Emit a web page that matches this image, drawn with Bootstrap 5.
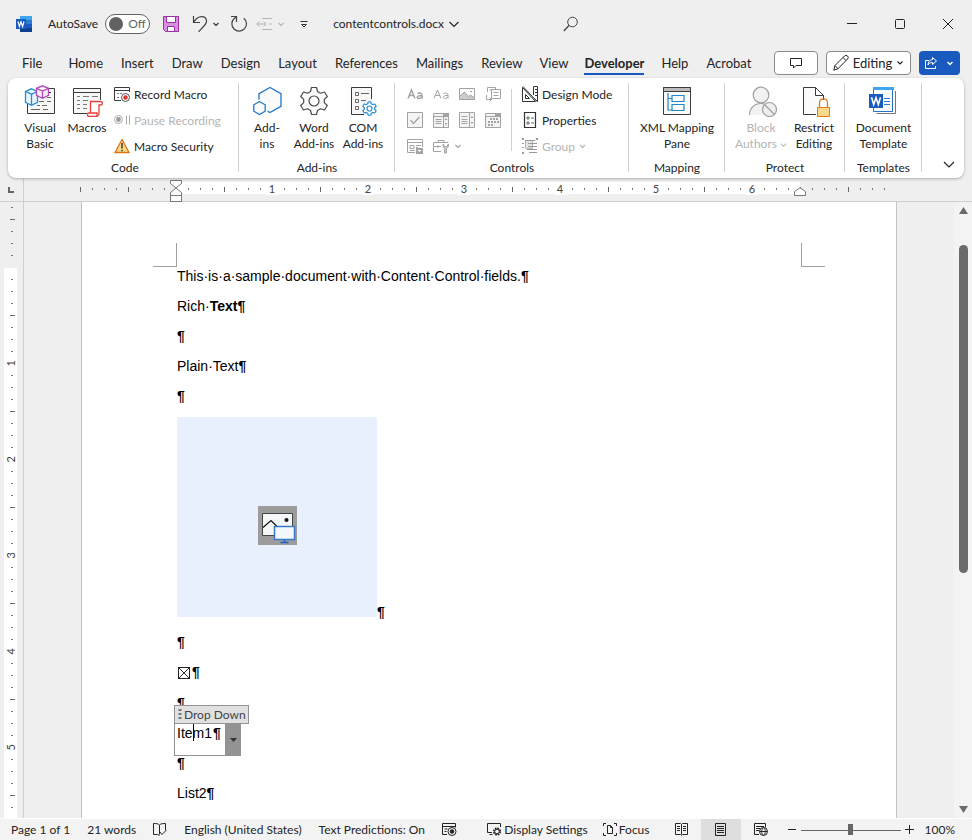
<!DOCTYPE html>
<html lang="en">
<head>
<meta charset="utf-8">
<meta name="viewport" content="width=device-width, initial-scale=1">
<title>contentcontrols.docx - Word</title>
<link href="https://cdn.jsdelivr.net/npm/bootstrap@5.3.0/dist/css/bootstrap.min.css" rel="stylesheet">
<style>
:root { --ink:#242424; --dim:#b4b4b4; --chrome:#efefef; --blue:#185abd; }
body { font:12px/16px Lato,"Open Sans",sans-serif; color:var(--ink); background:var(--chrome); fill:none; stroke:currentColor; }
svg { display:block; flex:none; }
button { border:0; background:none; padding:0; color:inherit; }
.gap-l2 { margin-left:2px; } .gap-l4 { margin-left:4px; } .gap-l8 { margin-left:8px; } .gap-l10 { margin-left:10px; } .gap-l13 { margin-left:13px; } .gap-l15 { margin-left:15px; } .gap-l17 { margin-left:17px; } .gap-l19 { margin-left:19px; } .gap-l25 { margin-left:25px; }
.find-btn { margin-left:103px; }
.title-row { height:48px; padding-left:16px; }
.toggle-box { width:45px; height:20px; border:1px solid #616161; border-radius:10px; background:#fff; color:#616161; padding-left:3px; margin-left:7px; }
.toggle-box input { appearance:none; width:14px; height:14px; border-radius:50%; background:#616161; margin:0 5px 0 0; }
.win-btn { width:48px; height:48px; }
.tab-row { height:30px; padding:0 12px 0 13px; font-size:13px; }
.tab-row .tab-link { color:var(--ink); text-decoration:none; padding:0 9px; height:24px; line-height:24px; white-space:nowrap; }
.tab-row .tab-link.near { padding:0 8px; }
.tab-row .tab-link.current { font-weight:700; }
.tab-row .current span { display:block; height:24px; border-bottom:2px solid var(--blue); }
.pill-btn { height:24px; border:1px solid #8a8a8a; border-radius:4px; background:#fff; }
.edit-btn { width:85px; }
.share-btn { background:var(--blue); color:#fff; width:41px; height:24px; border-radius:4px; }
.ribbon-bar { margin:0 8px; height:100px; background:#fff; border-radius:8px; box-shadow:0 1px 3px rgba(0,0,0,.28); position:relative; z-index:2; }
.rib-group { padding:3px 0 2px; position:relative; }
.rib-group::after { content:""; position:absolute; right:0; top:5px; bottom:6px; width:1px; background:#d1d1d1; }
.rib-group h2 { font-size:12px; line-height:16px; font-weight:400; margin:0; text-align:center; }
.big-btn { padding-top:4px; display:flex; flex-direction:column; align-items:center; gap:3px; white-space:nowrap; }
.small-btn { height:26px; display:flex; align-items:center; gap:4px; white-space:nowrap; }
.small-btn span { padding-top:1px; }
.code-body { padding-left:7px; }
.code-list { margin-left:5px; }
.add-body { padding-right:2px; }
.off { color:var(--dim); }
.ctl-body { padding-left:7px; }
.ctl-grid { display:grid; grid-template-columns:repeat(4,26px); grid-auto-rows:26px; align-content:start; color:#a3a3a3; }
.ctl-grid button { display:flex; align-items:center; justify-content:center; }
.inner-rule { width:1px; height:62px; margin:8px 10px 0 5px; background:#d1d1d1; }
.w44 { width:44px; } .w48 { width:48px; } .w50 { width:50px; } .w58 { width:58px; }
.g-code { width:231px; } .g-add { width:156px; } .g-ctl { width:234px; } .g-map { width:96px; } .g-pro { width:120px; } .g-tpl { width:77px; }
.g-code h2 { padding-left:3px; }
.rule-row { height:24px; border-bottom:1px solid #cfcfcf; }
.rule-corner { width:24px; border-right:1px solid #cfcfcf; }
.rule-scale { width:818px; position:relative; padding-top:4px; }
.rule-end { width:18px; }
.seg { height:12px; flex:none; font-size:11px; line-height:13px; color:#444; text-align:center;
  background-image:linear-gradient(#666,#666),linear-gradient(90deg,#777 1px,transparent 1px);
  background-size:1px 5px,12px 2px; background-position:0 5px,0 6px; background-repeat:no-repeat,repeat-x; }
.seg span { padding:0 3px; background:#fff; }
.seg.paper { background-color:#fff; }
.seg.edge { background-size:48px 5px,12px 2px; background-image:linear-gradient(90deg,#666 1px,transparent 1px),linear-gradient(90deg,#777 1px,transparent 1px); background-repeat:repeat-x; }
.seg.half { width:48px; background-size:0 0,12px 2px; }
.seg.inch { width:96px; }
.marker { position:absolute; }
.marker.start { left:90px; top:2px; }
.marker.end { left:714px; top:9px; }
.work-row { min-height:0; }
.v-rule { width:24px; border-right:1px solid #cfcfcf; padding-left:4px; overflow:hidden; }
.vseg { width:13px; flex:none; display:flex; align-items:center; justify-content:center; font-size:11px; line-height:12px; color:#444; background-color:#fff;
  background-image:linear-gradient(#666,#666),linear-gradient(#777 1px,transparent 1px);
  background-size:5px 1px,2px 12px; background-position:6px 0,7px 0; background-repeat:no-repeat,repeat-y; }
.vseg span { background:#fff; padding:3px 0; writing-mode:vertical-rl; transform:rotate(180deg); }
.vseg.top { height:65px; background-color:transparent; background-position:6px 17px,7px 5px; margin-bottom:1px; }
.vseg.first { height:47px; background-size:0 0,2px 12px; background-position:0 0,7px 11px; }
.vseg.full { height:96px; }
.canvas-area { overflow:hidden; }
.sheet { width:816px; background:#fff; border:1px solid #c4c4c4; border-width:0 1px; padding:41px 71px 0; font:14px/18px "Liberation Sans",Arial,sans-serif; color:#000; min-height:100%; }
.crop-mark { width:24px; height:24px; border:0 solid #a0a0a0; border-bottom-width:1px; }
.crop-mark.start { border-right-width:1px; } .crop-mark.end { border-left-width:1px; }
.doc-body { padding-left:24px; }
.doc-body p, .pic-line { margin:0 0 12px; }
.pic-slot { width:200px; height:200px; background:#e8effd; border-radius:2px; }
.pic-icon { width:39px; height:39px; background:#9c9c9c; margin:17px 0 0 1px; }
.doc-body .tick-line { line-height:19px; }
.doc-tick { appearance:none; width:12px; height:12px; margin:0 2px 0 1px; border:1px solid #222; vertical-align:-2px;
  background:linear-gradient(45deg,transparent 47%,#333 47%,#333 53%,transparent 53%),linear-gradient(135deg,transparent 47%,#333 47%,#333 53%,transparent 53%); }
.field-line { position:relative; z-index:1; }
.field-tag { position:absolute; left:-3px; top:-19px; height:19px; width:75px; border:1px solid #939393; background:#e1e1e1; color:#444; font:12px/17px Lato,sans-serif; padding-left:3px; display:flex; align-items:center; gap:1px; white-space:nowrap; }
.field-frame { position:absolute; left:-3px; top:-1px; width:67px; height:33px; border:1px solid #939393; }
.field-arrow { position:absolute; right:-1px; top:-1px; width:16px; height:33px; background:#939393; display:flex; align-items:center; justify-content:center; }
.field-pick { appearance:none; border:0; padding:0; background:none; font:inherit; color:inherit; line-height:18px; vertical-align:baseline; }
.caret-bar { position:absolute; left:16px; top:0; width:1px; height:17px; background:#000; }
.scroll-col { width:18px; padding:5px 0; background:#f3f3f3; border-radius:6px; }
.scroll-thumb { width:9px; height:328px; border-radius:5px; background:#6b6b6b; margin-top:31px; }
.status-row { height:22px; background:#f3f3f3; border-top:1px solid #fff; white-space:nowrap; padding-left:11px; }
.icon-text { display:flex; align-items:center; gap:2px; }
.view-on { width:40px; background:#dedede; align-self:stretch; display:flex; align-items:center; justify-content:center; }
.zoom-range { appearance:none; width:100px; height:12px; margin:0 4px; background:linear-gradient(#666,#666) 0 6px/100% 1px no-repeat; }
.zoom-range::-webkit-slider-thumb { appearance:none; width:5px; height:11px; background:#666; border:0; border-radius:0; }
.zoom-text { margin:0 17px 0 11px; }
</style>
<script src="https://cdn.jsdelivr.net/npm/bootstrap@5.3.0/dist/js/bootstrap.bundle.min.js"></script>
</head>
<body class="vh-100 d-flex flex-column overflow-hidden">

<header class="flex-shrink-0">
  <div class="title-row d-flex align-items-center">
    <svg width="16" height="16" viewBox="0 0 16 16" stroke="none"><path fill="#41a5ee" d="M4 0h12v4H4z"/><path fill="#2b7cd3" d="M4 4h12v4H4z"/><path fill="#185abd" d="M4 8h12v4H4z"/><path fill="#103f91" d="M4 12h12v4H4z"/><path fill="#185abd" d="M0 3h10v10H0z"/><path d="M2 5.500l1.400 5L5 5.800l1.600 4.700L8 5.500" fill="none" stroke="#fff" stroke-width="1.200"/></svg>
    <label for="autosave" class="ms-3">AutoSave</label>
    <span class="toggle-box d-flex align-items-center"><input type="checkbox" id="autosave"><span>Off</span></span>
    <button class="gap-l13" aria-label="Save"><svg width="16" height="16" viewBox="0 0 16 16" stroke="#9a2fa6"><path fill="#d88fe0" d="M.5.500h15v15h-13l-2-2z"/><path fill="#fff" d="M3.500.500h9v6h-9zM4.500 10.500h7v5h-7z"/></svg></button>
    <button class="gap-l13" aria-label="Undo"><svg width="18" height="18" viewBox="0 0 18 18" stroke="#444" stroke-width="1.200"><path d="M1.500 1v6.500H8M1.700 7.300C4 3.500 6.500 1.600 9.500 1.600c3 0 5 2 5 4.600 0 2-1 3.300-2.500 4.800L6.500 16.800"/></svg></button>
    <button class="gap-l2" aria-label="Undo options"><svg width="8" height="8" viewBox="0 0 8 8" stroke="#333" stroke-width="1.200"><path d="M1.500 3 4 5.500 6.500 3"/></svg></button>
    <button class="gap-l10" aria-label="Redo"><svg width="18" height="18" viewBox="0 0 18 18" stroke="#444" stroke-width="1.200"><path d="M1 1.500h5.500V7M13.800 3.200a7.300 7.300 0 1 1-9.600.3L6.500 1.800"/></svg></button>
    <button class="gap-l8 off" aria-label="Adjust list"><svg width="17" height="16" viewBox="0 0 17 16"><path d="M6 2.500h10M6 13.500h10M.8 8h9M13 8h3M3.500 5.500.8 8l2.700 2.500M7.500 5.500 10 8l-2.500 2.500"/></svg></button>
    <button class="gap-l4 off" aria-label="List options"><svg width="8" height="8" viewBox="0 0 8 8" stroke-width="1.200"><path d="M1.500 3 4 5.500 6.500 3"/></svg></button>
    <button class="gap-l15" aria-label="Customize toolbar"><svg width="8" height="8" viewBox="0 0 8 8" stroke="#333"><path d="M.5 1.500h7M1.500 4.500 4 7l2.500-2.500z"/></svg></button>
    <button class="gap-l25 d-flex align-items-center gap-1">contentcontrols.docx <svg width="12" height="12" viewBox="0 0 12 12" stroke-width="1.200"><path d="M1.500 4 6 8.500 10.500 4"/></svg></button>
    <button class="find-btn" aria-label="Search"><svg width="16" height="16" viewBox="0 0 16 16" stroke="#444"><circle cx="9.500" cy="6" r="4.800"/><path d="M6 9.500.8 15" stroke-width="1.300"/></svg></button>
    <div class="d-flex ms-auto">
      <button class="win-btn d-flex align-items-center justify-content-center" aria-label="Minimize"><svg width="10" height="10" viewBox="0 0 10 10"><path d="M0 4.500h10"/></svg></button>
      <button class="win-btn d-flex align-items-center justify-content-center" aria-label="Maximize"><svg width="10" height="10" viewBox="0 0 10 10"><rect x=".5" y=".5" width="9" height="9" rx="1"/></svg></button>
      <button class="win-btn d-flex align-items-center justify-content-center" aria-label="Close"><svg width="10" height="10" viewBox="0 0 10 10"><path d="M0 0l10 10M10 0 0 10"/></svg></button>
    </div>
  </div>

  <nav class="tab-row d-flex align-items-center">
    <a class="tab-link me-2" href="#">File</a><a class="tab-link" href="#">Home</a><a class="tab-link" href="#">Insert</a><a class="tab-link" href="#">Draw</a><a class="tab-link" href="#">Design</a><a class="tab-link" href="#">Layout</a><a class="tab-link" href="#">References</a><a class="tab-link" href="#">Mailings</a><a class="tab-link" href="#">Review</a><a class="tab-link near" href="#">View</a><a class="tab-link near current" href="#" aria-current="page"><span>Developer</span></a><a class="tab-link" href="#">Help</a><a class="tab-link" href="#">Acrobat</a>
    <div class="d-flex gap-2 ms-auto">
      <button class="pill-btn w44 d-flex align-items-center justify-content-center" aria-label="Comments"><svg width="12" height="12" viewBox="0 0 12 12"><path d="M.5 1.500h11v7H6L3.500 11V8.500h-3z"/></svg></button>
      <button class="pill-btn edit-btn d-flex align-items-center justify-content-center gap-1"><svg width="16" height="16" viewBox="0 0 16 16"><path d="M.8 15.200 2 10.500 11.500 1a2 2 0 0 1 3 0 2 2 0 0 1 0 3L5 13.800zM10 2.500 13 5.500M2 10.500l3 3.300"/></svg>Editing <svg width="8" height="8" viewBox="0 0 8 8" stroke-width="1.200"><path d="M1.500 2.500 4 5l2.500-2.500"/></svg></button>
      <button class="share-btn d-flex align-items-center justify-content-center gap-2" aria-label="Share"><svg width="13" height="12" viewBox="0 0 13 12"><path d="M4 3.500H.5v8h10V9M7.500.500l4 3.500-4 3.500v-2C5 5.500 4 6.500 3 8c.2-3 1.500-5 4.500-5.500z"/></svg><svg width="8" height="8" viewBox="0 0 8 8" stroke-width="1.400"><path d="M1.500 3 4 5.500 6.500 3"/></svg></button>
    </div>
  </nav>
</header>

<section class="ribbon-bar d-flex flex-shrink-0" aria-label="Developer ribbon">
  <div class="rib-group g-code d-flex flex-column">
    <div class="code-body d-flex flex-grow-1 align-items-start">
      <button class="big-btn w50"><svg width="32" height="32" viewBox="0 0 32 32"><path fill="#f7f7f7" stroke="none" d="M3 4h27v24H3z"/><path stroke="#3b3b3b" d="M24 3.500h6.500v25h-27V19M19 7.500h8"/><path stroke="#666" d="M17 12.500h3m3 0h4M15 16.500h5m3 0h4M13 20.500h3m2 0h5M7 24.500h9m3 0h5" /><path stroke="#2a8dd4" fill="#eaf4fb" stroke-width="1.300" d="M7.500 3.800l6 2.700v10.800l-6 3-6-3V6.500zM1.500 6.500l6 2.700 6-2.700M7.500 9.200v11"/><path stroke="#b14dbd" fill="#f8ecf9" stroke-width="1.300" d="M18.500.800l6 2.500v7l-6 3-6-3v-7zM12.500 3.300l6 2.700 6-2.700M18.500 6v7"/></svg><span>Visual<br>Basic</span></button>
      <button class="big-btn w44"><svg width="32" height="32" viewBox="0 0 32 32"><path fill="#f7f7f7" stroke="#3b3b3b" d="M16 28.500H2.500v-25h27V15M2.500 7.500h27"/><path stroke="#777" d="M6 11.500h3m3 0h6m3 0h6M6 15.500h3m3 0h5M6 19.500h3m3 0h4M6 23.500h3m3 0h4"/><path stroke="#e8403a" fill="#fff" stroke-width="1.300" d="M19.500 16.500h10c2.500 0 2.500 3.500 0 3.500h-1.500v8c0 4-3 3.500-3 3.500h-7c-2 0-2-3.500 0-3.500h1.500zM18 28h8v3"/></svg><span>Macros</span></button>
      <div class="code-list">
        <button class="small-btn"><svg width="16" height="16" viewBox="0 0 16 16"><path d="M7 14.500H.5v-13h15V6M.5 4.500h15" stroke="#3b3b3b"/><path stroke="#777" d="M3 7.500h2m1 0h2M3 11.500h2"/><circle cx="11.500" cy="11.500" r="4" fill="#fff" stroke="#555"/><circle cx="11.500" cy="11.500" r="2.200" fill="#e8302a" stroke="none"/></svg><span>Record Macro</span></button>
        <button class="small-btn off" disabled><svg width="16" height="16" viewBox="0 0 16 16"><circle cx="4.500" cy="7.500" r="4" stroke="#aaa"/><circle cx="4.500" cy="7.500" r="2.400" fill="#999" stroke="none"/><path d="M12.500 3.500v9M15.500 3.500v9" stroke="#aaa"/></svg><span>Pause Recording</span></button>
        <button class="small-btn"><svg width="16" height="16" viewBox="0 0 16 16"><path d="M8 1.500 15 14.500H1z" fill="#f9d98c" stroke="#dc7410" stroke-width="1.300"/><path d="M8 5v5.500M8 11.700v1.500" stroke="#333" stroke-width="1.400"/></svg><span>Macro Security</span></button>
      </div>
    </div>
    <h2>Code</h2>
  </div>

  <div class="rib-group g-add d-flex flex-column">
    <div class="add-body d-flex flex-grow-1 align-items-start justify-content-center">
      <button class="big-btn w44"><svg width="32" height="32" viewBox="0 0 32 32" stroke="#1f78c8" stroke-width="1.300"><path fill="#fafafa" d="M19 2.500l11 6.200v12.600l-11 6.200-11-6.200V8.700z"/><path stroke="#fff" stroke-width="4" fill="#fff" d="M8.500 16.500l6 3.300v6.700l-6 3.300-6-3.300v-6.700z"/><path fill="#fafafa" d="M8.500 16.500l5.700 3.300v6.400l-5.700 3.300-5.700-3.300v-6.400z"/></svg><span>Add-<br>ins</span></button>
      <button class="big-btn w50"><svg width="32" height="32" viewBox="0 0 32 32" stroke="#4a4a4a" stroke-width="1.200"><path fill="#fafafa" stroke-linejoin="round" d="M13.500 2.500h5l1 4 3 1.700 4-1.200 2.800 4.500-3 2.900v3.200l3 2.900-2.800 4.500-4-1.200-3 1.700-1 4h-5l-1-4-3-1.700-4 1.200-2.800-4.500 3-2.900v-3.200l-3-2.900L5.500 7l4 1.200 3-1.700z"/><circle cx="16" cy="16" r="5" fill="#fff"/></svg><span>Word<br>Add-ins</span></button>
      <button class="big-btn w48"><svg width="32" height="32" viewBox="0 0 32 32"><path fill="#f7f7f7" stroke="#3b3b3b" d="M17 29.500H4.500v-27h20V14"/><path stroke="#666" d="M8.500 7.500h3v3h-3zM8.500 14.500h3v3h-3zM8.500 21.500h3v3h-3zM14 8.500h8M14 15.500h5"/><path transform="translate(14.500 15.500) scale(.5)" stroke="#2a8dd4" stroke-width="2.400" fill="#fff" stroke-linejoin="round" d="M13.500 2.500h5l1 4 3 1.700 4-1.200 2.800 4.500-3 2.900v3.200l3 2.900-2.800 4.500-4-1.200-3 1.700-1 4h-5l-1-4-3-1.700-4 1.200-2.800-4.500 3-2.900v-3.200l-3-2.900L5.500 7l4 1.200 3-1.700z"/><circle cx="22.500" cy="23.500" r="2.500" stroke="#2a8dd4" stroke-width="1.200"/></svg><span>COM<br>Add-ins</span></button>
    </div>
    <h2>Add-ins</h2>
  </div>

  <div class="rib-group g-ctl d-flex flex-column">
    <div class="ctl-body d-flex flex-grow-1 align-items-start">
      <div class="ctl-grid">
        <button aria-label="Rich text control"><svg width="16" height="16" viewBox="0 0 16 16" stroke-width="1.500"><path d="M1 12.500 4.500 4 8 12.500M2.200 9.500h4.600M10.500 7.500c3-1.200 4.500-.3 4.500 1.500v3.500M15 9.500c-3 0-4.700.5-4.700 1.800 0 1.700 3.700 1.700 4.700-.5"/></svg></button>
        <button aria-label="Plain text control"><svg width="16" height="16" viewBox="0 0 16 16"><path d="M1 12.500 4.500 4 8 12.500M2.200 9.500h4.600M10.500 7.500c3-1.200 4.500-.3 4.500 1.500v3.500M15 9.500c-3 0-4.700.5-4.700 1.800 0 1.700 3.700 1.700 4.700-.5"/></svg></button>
        <button aria-label="Picture control"><svg width="16" height="16" viewBox="0 0 16 16"><path d="M.5 2.500h15v11H.5z"/><path fill="#ccc" d="M.5 10.500l5-4.500 4 4.500 2-1.500 4 3v1.500H.5z"/><path d="M11 5.500h2"/></svg></button>
        <button aria-label="Building block control"><svg width="16" height="16" viewBox="0 0 16 16"><path d="M2.500 6V1.500h8v2M6.500 3.500h9v9h-9zM8.500 6.500h5M8.500 9.500h5M4.500 4h2M1.500 9v4.500h5M4.500 11.500l2 2-2 2"/></svg></button>
        <button aria-label="Check box control"><svg width="16" height="16" viewBox="0 0 16 16"><path fill="#f4f4f4" d="M.5.500h15v15H.5z"/><path stroke-width="1.300" d="M3.500 8l3 3.500L12.500 5"/></svg></button>
        <button aria-label="Combo box control"><svg width="16" height="16" viewBox="0 0 16 16"><path fill="#f4f4f4" d="M.5 1.500h15v14H.5zM10.500 4v11.500M.5 4.500h15M2.500 7.500h6M2.500 9.500h6M2.500 11.500h6"/><path fill="currentColor" stroke="none" d="M10 1h6v3h-6zM11.500 8l1.500-2 1.500 2zM11.500 11l1.500 2 1.500-2z"/></svg></button>
        <button aria-label="Drop-down control"><svg width="16" height="16" viewBox="0 0 16 16"><path fill="#f4f4f4" d="M.5.500h15v15H.5zM10.500 1v14.500M2.500 4.500h6M2.500 7.500h6M2.500 9.500h6M2.500 11.500h6"/><path fill="currentColor" stroke="none" d="M11.500 6l1.500-2 1.500 2zM11.500 10l1.500 2 1.500-2z"/></svg></button>
        <button aria-label="Date picker control"><svg width="16" height="16" viewBox="0 0 16 16"><path fill="#f4f4f4" d="M.5 1.500h15v14H.5zM.5 4.500h15"/><path fill="currentColor" stroke="none" d="M10 1h6v3h-6z"/><path stroke-width="2" stroke-dasharray="2 1" d="M5 7h9M3 10h11M3 13h6"/></svg></button>
        <button aria-label="Repeating section control"><svg width="16" height="16" viewBox="0 0 16 16"><path d="M8 14.500H.5v-13h15V9M.5 4.500h15M3 7.500h4v3H3zM9 7.500h5M9 9.500h2M3 12.500h5"/><path fill="currentColor" stroke="none" d="M9 10h7v6H9z"/><path fill="#fff" stroke="none" d="M10.500 12h4l-2 2z"/></svg></button>
        <button aria-label="Legacy tools"><svg width="16" height="16" viewBox="0 0 16 16"><path d="M8 13.500H.5v-9h15M5 4.500v-2h6v2M.5 8.500H5M5 7v3M5 8.500h3"/><path fill="#ccc" d="M10 6v2.500c0 1 1 1.500 1.500 2v4.500h2v-4.500c.8-.5 1.800-1 1.800-2V6l-1.300 2.500h-2z"/></svg></button>
        <button aria-label="Legacy options" class="justify-content-start"><svg width="8" height="8" viewBox="0 0 8 8" stroke-width="1.200"><path d="M1.500 3 4 5.500 6.500 3"/></svg></button>
      </div>
      <div class="inner-rule"></div>
      <div>
        <button class="small-btn"><svg width="16" height="16" viewBox="0 0 16 16" stroke="#333"><path d="M.5 1.500v14h13zM3.500 8.500v4h4zM11.500 9V.500h4v15l-3-3M1 .5l14 15M13 3.500h2M13 6.500h2M13 9.500h2"/></svg><span>Design Mode</span></button>
        <button class="small-btn"><svg width="16" height="16" viewBox="0 0 16 16" stroke="#333"><path stroke-width="1.200" d="M2.500.500h11v15h-11z"/><path stroke="#666" d="M5 5h2v2H5zM5 10h2v2H5zM9 6h3M9 11h3"/></svg><span>Properties</span></button>
        <button class="small-btn off" disabled><svg width="16" height="16" viewBox="0 0 16 16"><path fill="#e4e4e4" d="M3.500 2.500h7v8h-7z"/><path stroke="#999" d="M3 2.500h10M6 5.500h9M6 8.500h9M5 11.500h10M7 14.500h8"/><path fill="#999" stroke="none" d="M0 0h2v2H0zM14 0h2v2h-2zM0 14h2v2H0zM0 5h2v1H0zM0 9h2v1H0z"/></svg><span>Group</span><svg width="8" height="8" viewBox="0 0 8 8" stroke-width="1.200"><path d="M1 3l2.500 2.500L6 3"/></svg></button>
      </div>
    </div>
    <h2>Controls</h2>
  </div>

  <div class="rib-group g-map d-flex flex-column">
    <div class="d-flex flex-grow-1 align-items-start justify-content-center">
      <button class="big-btn"><svg width="32" height="32" viewBox="0 0 32 32"><path fill="#fafafa" stroke="#3b3b3b" d="M2.500 2.500h27v27h-27z"/><path fill="#bcbcbc" stroke="#3b3b3b" d="M2.500 2.500h27v4h-27z"/><path stroke="#1f88cc" stroke-width="1.200" d="M7 8v17h4M7 13.500h4M11 10.500h12v6H11zM11 19.500h12v6H11z"/></svg><span>XML Mapping<br>Pane</span></button>
    </div>
    <h2>Mapping</h2>
  </div>

  <div class="rib-group g-pro d-flex flex-column">
    <div class="d-flex flex-grow-1 align-items-start justify-content-center">
      <button class="big-btn w58 off" disabled><svg width="32" height="32" viewBox="0 0 32 32" stroke="#a0a0a0" stroke-width="1.200"><circle cx="16" cy="10" r="7.800" fill="#f2f2f2"/><path fill="#f2f2f2" d="M4.500 30c0-7 5-11.500 11.500-11.500 4 0 7 1.500 9 4V30" stroke="none"/><path d="M4.500 30c0-7 5-11.500 11.500-11.500 2 0 3 .3 4 .8"/><circle cx="24.500" cy="24.500" r="7" fill="#eee"/><path d="M19.500 19.500l10 10"/></svg><span>Block<br>Authors <svg class="d-inline" width="7" height="7" viewBox="0 0 8 8" stroke-width="1.200"><path d="M1 3l3 3 3-3"/></svg></span></button>
      <button class="big-btn w48"><svg width="32" height="32" viewBox="0 0 32 32"><path fill="#fafafa" stroke="#3b3b3b" d="M19 29.500H5.500v-27h12l8 8V15M17.500 2.500v8h8"/><path fill="#fff" stroke="none" d="M18 15h14v17H18z"/><path stroke="#e07c14" stroke-width="1.300" d="M21.500 22v-4c0-5.500 8-5.500 8 0v4"/><path stroke="#e07c14" fill="#f9d98c" d="M19.500 22.500h12v9h-12z"/></svg><span>Restrict<br>Editing</span></button>
    </div>
    <h2>Protect</h2>
  </div>

  <div class="rib-group g-tpl d-flex flex-column">
    <div class="d-flex flex-grow-1 align-items-start justify-content-center">
      <button class="big-btn"><svg width="32" height="32" viewBox="0 0 32 32"><path fill="#fff" stroke="#777" d="M9.500 28.500h19V6M6.500 22v4.500h19"/><path fill="#fafafa" stroke="#2a70c8" d="M6.500 3.500h19v23h-19z"/><path fill="#41a5ee" stroke="none" d="M6 2h21v3H6z"/><path stroke="#2b7cd3" d="M17 13.500h6M17 16.500h6M17 19.500h6"/><path fill="#185abd" stroke="none" d="M2 9h14v14H2z"/><path d="M4.500 12.200l2.200 7.300L9 12.800l2.300 6.700 2.200-7.300" stroke="#fff" stroke-width="1.600"/></svg><span>Document<br>Template</span></button>
    </div>
    <h2>Templates</h2>
  </div>
  <button class="ms-auto me-2 mb-2 align-self-end" aria-label="Collapse ribbon"><svg width="14" height="12" viewBox="0 0 14 12" stroke-width="1.200"><path d="M2 4l5 5 5-5"/></svg></button>
</section>

<div class="rule-row d-flex flex-shrink-0" aria-label="Horizontal ruler">
  <div class="rule-corner d-flex align-items-center ps-2"><svg width="7" height="6" viewBox="0 0 7 6" stroke="#666" stroke-width="2"><path d="M1 0v5h5"/></svg></div>
  <div class="flex-grow-1 d-flex justify-content-center">
    <div class="rule-scale d-flex">
      <div class="seg edge inch"></div><div class="seg paper half"></div>
      <div class="seg paper inch"><span>1</span></div><div class="seg paper inch"><span>2</span></div><div class="seg paper inch"><span>3</span></div><div class="seg paper inch"><span>4</span></div><div class="seg paper inch"><span>5</span></div><div class="seg paper inch"><span>6</span></div>
      <div class="seg edge flex-fill me-2"></div>
      <svg class="marker start" width="12" height="22" viewBox="0 0 12 22" stroke="#777"><path fill="#fff" d="M.5.500h11v3L6 8l5.500 4.500v3H.500v-3L6 8 .500 3.500zM.5 15.500h11v6H.500z"/></svg>
      <svg class="marker end" width="12" height="9" viewBox="0 0 12 9" stroke="#777"><path fill="#fff" d="M.5 8.500v-4L6 .8l5.500 3.700v4z"/></svg>
    </div>
  </div>
  <div class="rule-end"></div>
</div>

<main class="work-row d-flex flex-grow-1">
  <div class="v-rule d-flex flex-column" aria-label="Vertical ruler">
    <div class="vseg top"></div><div class="vseg first"></div>
    <div class="vseg full"><span>1</span></div><div class="vseg full"><span>2</span></div><div class="vseg full"><span>3</span></div><div class="vseg full"><span>4</span></div><div class="vseg full"><span>5</span></div><div class="vseg full"></div>
  </div>
  <div class="canvas-area flex-grow-1 d-flex justify-content-center">
    <article class="sheet">
      <div class="d-flex justify-content-between"><span class="crop-mark start"></span><span class="crop-mark end"></span></div>
      <div class="doc-body">
        <p>This·is·a·sample·document·with·Content·Control·fields.<b>¶</b></p>
        <p>Rich·<b>Text¶</b></p>
        <p><b>¶</b></p>
        <p>Plain·Text<b>¶</b></p>
        <p><b>¶</b></p>
        <div class="pic-line d-flex align-items-end">
          <div class="pic-slot d-flex align-items-center justify-content-center mb-1"><div class="pic-icon"><svg width="39" height="39" viewBox="0 0 39 39"><path fill="#f4f8f8" stroke="#444" d="M4.500 7.500h30v22h-30z"/><path stroke="#111" stroke-width="1.200" d="M5 21.500l8-7 6 6"/><circle cx="28.500" cy="14" r="2" fill="#111" stroke="none"/><path fill="#f4f8fc" stroke="#3a78c9" stroke-width="1.500" d="M16.500 20.500h20v13h-20z"/><path stroke="#1f60c0" stroke-width="1.400" d="M26.500 34v2.500M22.500 36.500h8"/></svg></div></div><b>¶</b>
        </div>
        <p><b>¶</b></p>
        <p class="tick-line"><input class="doc-tick" type="checkbox" checked aria-label="Check box"><b>¶</b></p>
        <p><b>¶</b></p>
        <p class="field-line"><label class="field-tag" for="itemPick"><svg width="5" height="12" viewBox="0 0 5 12" stroke="#777" stroke-width="3" stroke-dasharray="2 2"><path d="M2 0v12"/></svg>Drop Down</label><select class="field-pick" id="itemPick"><option>Item1</option></select><b>¶</b><span class="field-frame"><button class="field-arrow" aria-label="Open list"><svg width="7" height="4" viewBox="0 0 7 4" stroke="none"><path fill="#333" d="M0 0h7L3.500 4z"/></svg></button></span><span class="caret-bar"></span></p>
        <p><b>¶</b></p>
        <p>List2<b>¶</b></p>
      </div>
    </article>
  </div>
  <div class="scroll-col d-flex flex-column align-items-center">
    <svg width="9" height="7" viewBox="0 0 9 7" stroke="none"><path fill="#6b6b6b" d="M4.500 0 9 7H0z"/></svg>
    <div class="scroll-thumb"></div>
    <svg class="mt-auto" width="9" height="7" viewBox="0 0 9 7" stroke="none"><path fill="#6b6b6b" d="M0 0h9L4.500 7z"/></svg>
  </div>
</main>

<footer class="status-row d-flex flex-shrink-0 align-items-center">
  <span>Page 1 of 1</span><span class="gap-l17">21 words</span>
  <button class="gap-l17" aria-label="Proofing"><svg width="14" height="13" viewBox="0 0 14 13"><path d="M6.500 2v9.500M6.500 2C5 .5 3 .5.500.500v11h4l2 1M6.500 2C8 .5 10 .5 12.500.500V7M6.500 8.500l2.500 3 4.500-4.500"/></svg></button>
  <span class="gap-l17">English (United States)</span><span class="gap-l17">Text Predictions: On</span>
  <button class="gap-l17" aria-label="Record macro"><svg width="15" height="13" viewBox="0 0 15 13"><path d="M5 11.500H.5V.500h13v4M.5 3.500h13M2.500 6h3M2.500 8.500h2"/><circle cx="10" cy="8.500" r="4"/><circle cx="10" cy="8.500" r="1.800" fill="currentColor"/></svg></button>
  <button class="icon-text ms-auto"><svg width="15" height="13" viewBox="0 0 15 13"><path d="M5 9.500H.5V.500h13V4M2.500 11.500h3"/><circle cx="10" cy="8.500" r="3.200" stroke-width="1.800" stroke-dasharray="1.700 .8"/><circle cx="10" cy="8.500" r="2.300"/></svg>Display Settings</button>
  <button class="icon-text gap-l15"><svg width="14" height="13" viewBox="0 0 14 13"><path d="M3 .5H.5V3M11 .5h2.500V3M.5 10v2.500H3M13.500 10v2.500H11M4.500 10.500v-8h3l2 2v6zM7.500 2.500v2h2"/></svg>Focus</button>
  <button class="gap-l25" aria-label="Read mode"><svg width="13" height="13" viewBox="0 0 13 13"><path d="M.5.500h5l1 1 1-1h5v11h-5l-1 1-1-1h-5zM6.500 1.500v10M2 3.500h3M2 5.500h3M2 7.500h3M8 3.500h3M8 5.500h3M8 7.500h3"/></svg></button>
  <button class="view-on gap-l13" aria-label="Print layout"><svg width="11" height="13" viewBox="0 0 11 13"><path d="M.5.500h10v12H.500zM2 3.500h7M2 5.500h7M2 7.500h7M2 9.500h7"/></svg></button>
  <button class="gap-l13" aria-label="Web layout"><svg width="15" height="13" viewBox="0 0 15 13"><path d="M5 11.500H.500V.500h11v4M2 3.500h8M2 5.500h4M2 7.500h3"/><circle cx="9.500" cy="8.500" r="4"/><path d="M5.500 8.500h8M9.500 4.500c-2.500 2.500-2.500 5.500 0 8 2.500-2.500 2.500-5.500 0-8"/></svg></button>
  <button class="gap-l19" aria-label="Zoom out"><svg width="9" height="9" viewBox="0 0 9 9"><path d="M0 4.500h8"/></svg></button>
  <input class="zoom-range" type="range" min="0" max="100" value="50" aria-label="Zoom">
  <button aria-label="Zoom in"><svg width="9" height="9" viewBox="0 0 9 9"><path d="M0 4.500h9M4.500 0v9"/></svg></button>
  <span class="zoom-text">100%</span>
</footer>
</body>
</html>
